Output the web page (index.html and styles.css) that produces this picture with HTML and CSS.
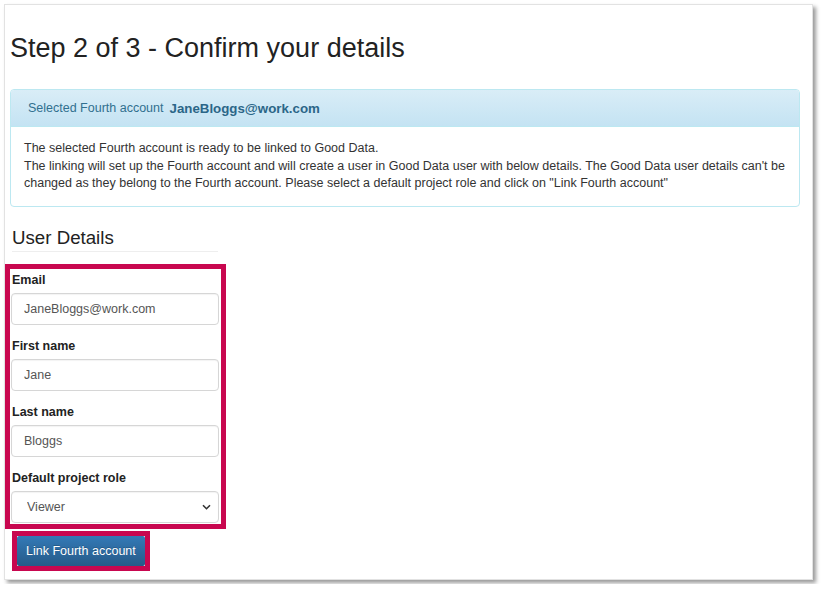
FILE: index.html
```html
<!DOCTYPE html>
<html lang="en">
  <head>
    <meta charset="UTF-8" />
    <meta name="viewport" content="width=device-width, initial-scale=1.0" />
    <title>Confirm your details</title>
    <link rel="stylesheet" href="styles.css">
  </head>
  <body>
    <div class="shot">
      <h1>Step 2 of 3 - Confirm your details</h1>

      <div class="panel">
        <div class="panel-heading">
          Selected Fourth account <strong>JaneBloggs@work.com</strong>
        </div>
        <div class="panel-body">
          The selected Fourth account is ready to be linked to Good Data.<br />
          The linking will set up the Fourth account and will create a user in Good Data user with below details. The Good Data user details can't be changed as they belong to the Fourth account. Please select a default project role and click on "Link Fourth account"
        </div>
      </div>

      <form class="details" id="linkForm">
        <h2>User Details</h2>

        <div class="marked fields">
          <label for="email">Email</label>
          <input type="text" id="email" name="email" value="JaneBloggs@work.com" readonly />

          <label for="firstName">First name</label>
          <input type="text" id="firstName" name="firstName" value="Jane" readonly />

          <label for="lastName">Last name</label>
          <input type="text" id="lastName" name="lastName" value="Bloggs" readonly />

          <label for="role">Default project role</label>
          <select id="role" name="role">
            <option selected>Viewer</option>
            <option>Editor</option>
            <option>Admin</option>
          </select>
        </div>

        <div class="marked submit">
          <button type="submit">Link Fourth account</button>
        </div>
      </form>
    </div>
  </body>
</html>
```

FILE: styles.css
```css
:root {
  --text-color: #333;
  --info-text: #31708f;
  --info-border: #bce8f1;
  --mark-color: #c8074f;
  --button-top: #337ab7;
  --button-bottom: #265a88;
}

body {
  margin: 0;
  background-color: #fff;
  font-family: "Liberation Sans", Arial, sans-serif;
  font-size: 12.5px;
  color: var(--text-color);
}

.shot {
  box-sizing: border-box;
  width: 809px;
  height: 576px;
  margin: 4px;
  padding: 28px 12px 0 5px;
  background-color: #fff;
  border: 1px solid #e2e2e2;
  box-shadow: 3px 3px 4px rgba(0, 0, 0, 0.4);
}

h1 {
  margin: 0 0 26px;
  font-size: 27px;
  font-weight: normal;
  line-height: 30px;
  color: #222;
}

.panel {
  border: 1px solid var(--info-border);
  border-radius: 4px;
  background-color: #fff;
}

.panel-heading {
  height: 36px;
  padding: 0 17px;
  display: flex;
  align-items: center;
  gap: 6px;
  background: linear-gradient(#d9edf7, #c4e3f3);
  border-bottom: 1px solid var(--info-border);
  border-radius: 3px 3px 0 0;
  color: var(--info-text);
}

.panel-heading strong {
  font-size: 13.3px;
  color: #2b6688;
}

.panel-body {
  padding: 13px;
  line-height: 17.5px;
}

.details {
  margin: 21px 0 0;
}

h2 {
  width: 206px;
  margin: 0 0 12px 2px;
  padding-bottom: 3px;
  font-size: 18.7px;
  font-weight: normal;
  line-height: 20px;
  color: #222;
  border-bottom: 1px solid #eee;
}

.marked {
  border: 5px solid var(--mark-color);
}

.fields {
  width: 210px;
  margin-left: -5px;
  padding: 2px 0 1px 1px;
  box-sizing: content-box;
}

label {
  display: block;
  margin: 0 0 4px 1px;
  font-weight: bold;
  line-height: 18px;
  color: #222;
}

input[type="text"],
select {
  display: block;
  box-sizing: border-box;
  width: 208px;
  height: 32px;
  margin-bottom: 12px;
  padding: 0 12px;
  border: 1px solid #d6d6d6;
  border-radius: 4px;
  background-color: #fff;
  box-shadow: inset 0 1px 1px rgba(0, 0, 0, 0.05);
  font-family: inherit;
  font-size: 12.5px;
  color: #555;
}

select {
  margin-bottom: 0;
  padding-left: 15px;
  -webkit-appearance: none;
  appearance: none;
  background-image: url("data:image/svg+xml;utf8,<svg xmlns='http://www.w3.org/2000/svg' width='9' height='6' viewBox='0 0 9 6'><path d='M1 1.2l3.5 3.5 3.5-3.5' fill='none' stroke='%23333' stroke-width='1.6'/></svg>");
  background-repeat: no-repeat;
  background-position: right 7px center;
}

.submit {
  display: inline-block;
  margin: 2px 0 0 2px;
}

button {
  display: block;
  height: 30px;
  padding: 0 9px;
  border: none;
  border-radius: 2px;
  background: linear-gradient(var(--button-top), var(--button-bottom));
  color: #fff;
  font-family: inherit;
  font-size: 12.5px;
  text-shadow: 0 -1px 0 rgba(0, 0, 0, 0.2);
  cursor: pointer;
}
```
